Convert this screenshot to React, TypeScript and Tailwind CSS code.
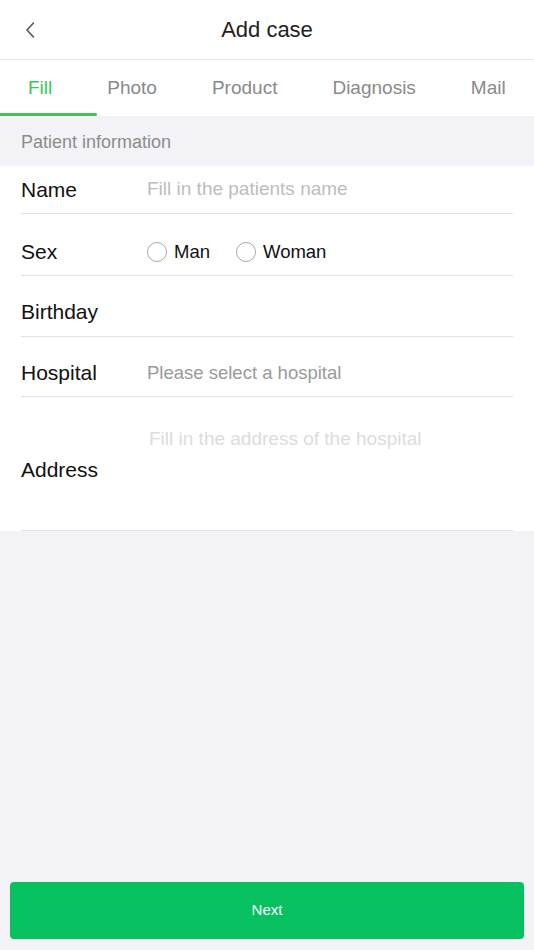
const tabs = ["Fill", "Photo", "Product", "Diagnosis", "Mail"]

const Radio = ({ label }: { label: string }) => (
  <label className="flex items-center gap-[7px]">
    <span className="w-[20px] h-[20px] rounded-full border-[1.5px] border-[#a8a8a8] bg-white" />
    <span className="text-[18.5px] text-[#111]">{label}</span>
  </label>
)

const App = () => {
  return (
    <div
      className="h-[950px] flex flex-col bg-[#f3f3f7]"
      style={{ fontFamily: '"Liberation Sans", Arial, sans-serif' }}
    >
      {/* header */}
      <div className="h-[60px] shrink-0 bg-white border-b border-[#e6e6e6] flex items-center relative">
        <button className="absolute left-[21px] top-[20px] w-[18px] h-[20px] flex items-center justify-center">
          <svg width="12" height="18" viewBox="0 0 12 18" fill="none">
            <path d="M9.5 2 L3 9 L9.5 16" stroke="#555" strokeWidth="1.6" strokeLinecap="round" strokeLinejoin="round" />
          </svg>
        </button>
        <h1 className="flex-1 text-center text-[22px] text-[#222]">Add case</h1>
      </div>

      {/* tabs */}
      <div className="h-[56px] shrink-0 bg-white flex flex-col">
        <div className="flex-1 flex items-center gap-[55px] pl-[28px] pt-[3px]">
          {tabs.map((tab, i) => (
            <span
              key={tab}
              className={i === 0 ? "text-[19px] text-[#3cc659]" : "text-[19px] text-[#8a8a8a]"}
            >
              {tab}
            </span>
          ))}
        </div>
        <div className="w-[97px] h-[3px] bg-[#3cc659] rounded-r-full" />
      </div>

      {/* section */}
      <div className="h-[50px] shrink-0 flex items-center pt-[2px] px-[21px] text-[18px] text-[#8c8c8c]">
        Patient information
      </div>

      <div className="bg-white px-[21px] shrink-0">
        <div className="h-[48px] flex items-center border-b border-[#e2e2e2]">
          <span className="w-[126px] text-[21px] text-[#111]">Name</span>
          <input
            className="flex-1 outline-none text-[19px] placeholder:text-[#bdbdbd]"
            placeholder="Fill in the patients name"
          />
        </div>
        <div className="h-[62px] pt-[14px] flex items-center border-b border-[#e2e2e2]">
          <span className="w-[126px] text-[21px] text-[#111]">Sex</span>
          <div className="flex items-center gap-[26px]">
            <Radio label="Man" />
            <Radio label="Woman" />
          </div>
        </div>
        <div className="h-[61px] pt-[12px] flex items-center border-b border-[#e2e2e2]">
          <span className="w-[126px] text-[21px] text-[#111]">Birthday</span>
        </div>
        <div className="h-[60px] pt-[12px] flex items-center border-b border-[#e2e2e2]">
          <span className="w-[126px] text-[21px] text-[#111]">Hospital</span>
          <span className="text-[18.5px] text-[#9a9a9a]">Please select a hospital</span>
        </div>
        <div className="h-[134px] flex border-b border-[#e2e2e2]">
          <span className="w-[126px] pt-[13px] flex items-center text-[21px] text-[#111]">Address</span>
          <textarea
            className="flex-1 resize-none outline-none pt-[30px] px-[2px] text-[19px] leading-6 placeholder:text-[#dcdcdc]"
            placeholder="Fill in the address of the hospital"
          />
        </div>
      </div>

      <div className="flex-1" />

      <div className="px-[10px] pb-[11px] shrink-0">
        <button className="w-full h-[57px] rounded-[4px] bg-[#07c160] text-white text-[15px]">Next</button>
      </div>
    </div>
  )
}

export default App
